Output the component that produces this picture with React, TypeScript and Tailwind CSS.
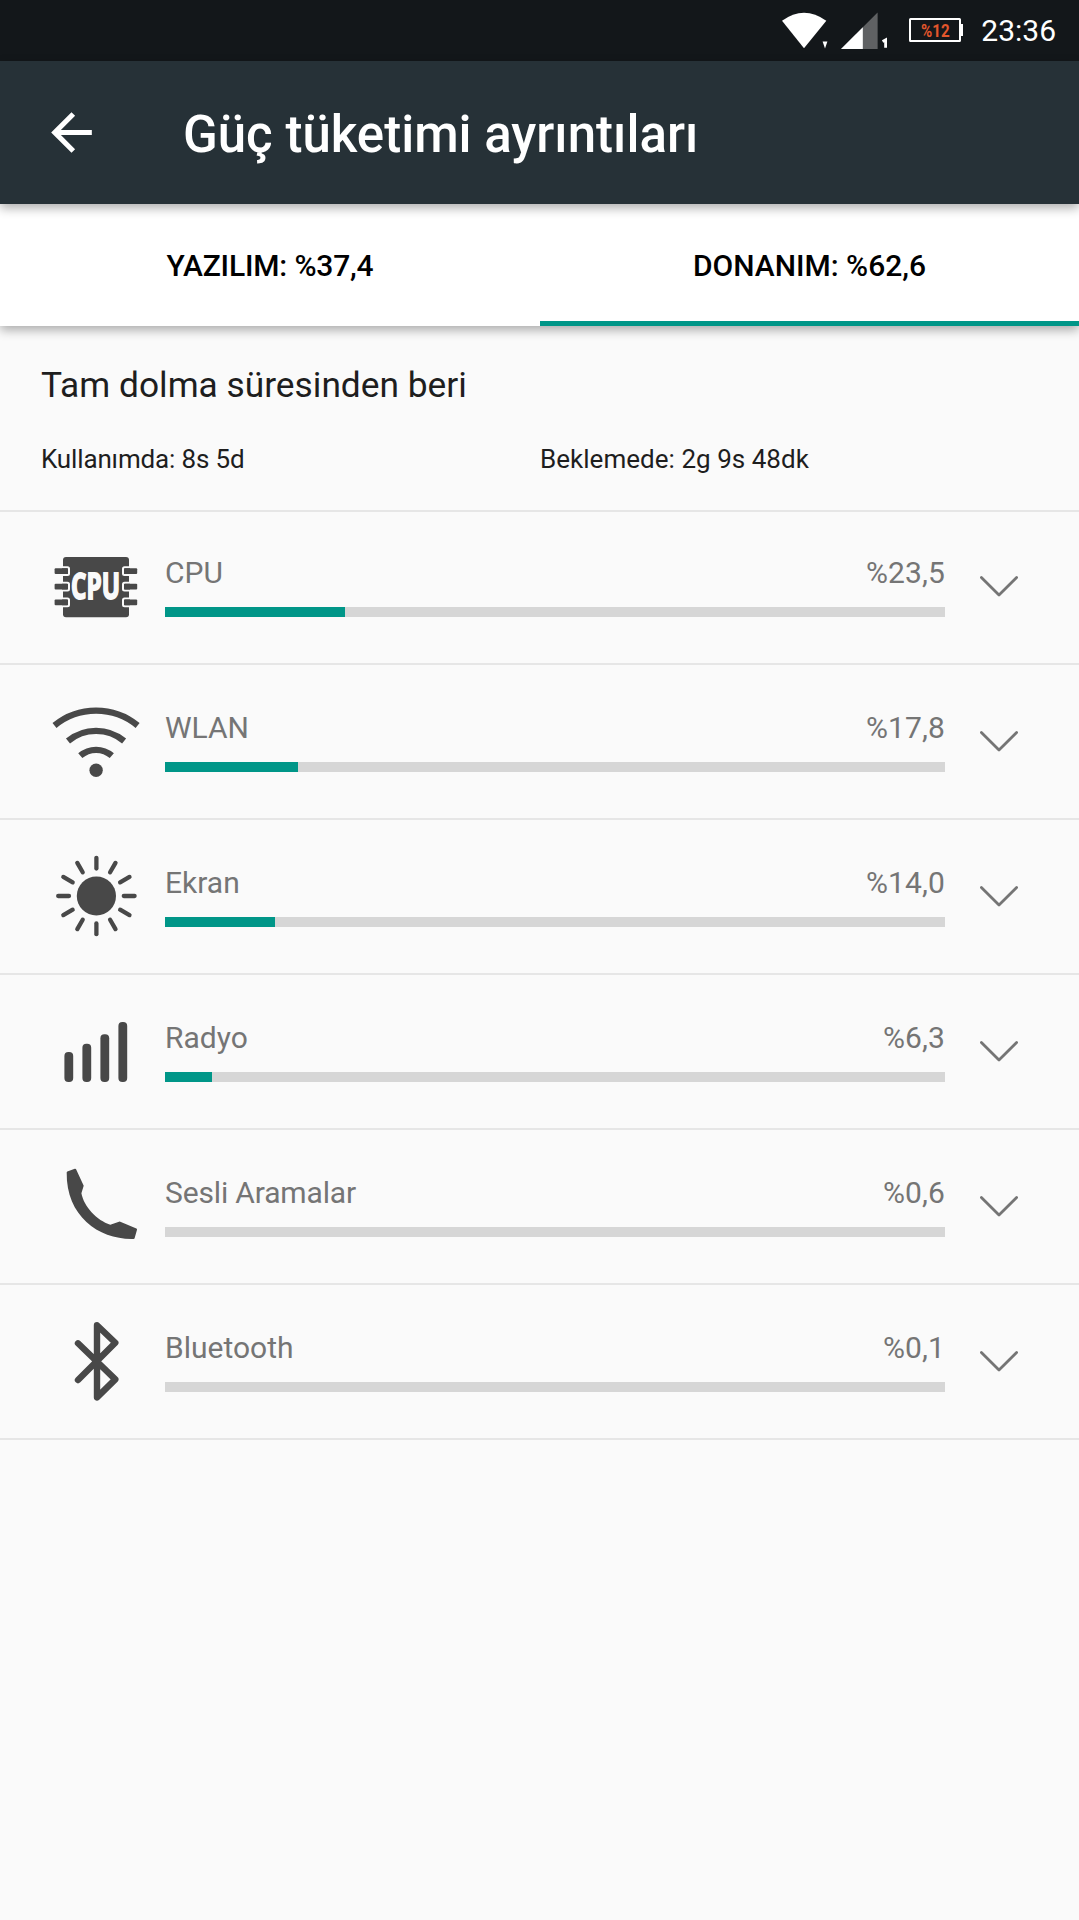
import type { ReactNode } from 'react';

const INK = '#484848';

function CpuIcon() {
  const pins = [33.3, 48.8, 64.4];
  return (
    <>
      <rect x="23" y="22" width="66" height="60.3" rx="3" fill={INK} />
      {pins.map((y) => (
        <g key={y} fill={INK} stroke="#fafafa" strokeWidth="2">
          <path d={`M22 ${y - 1}H27.5Q29 ${y - 1} 29 ${y + 0.5}V${y + 5.3}Q29 ${y + 6.8} 27.5 ${y + 6.8}H22`} />
          <path d={`M90 ${y - 1}H84.5Q83 ${y - 1} 83 ${y + 0.5}V${y + 5.3}Q83 ${y + 6.8} 84.5 ${y + 6.8}H90`} />
          <rect x="14.6" y={y} width="13.2" height="5.8" rx="1" stroke="none" />
          <rect x="84.2" y={y} width="13" height="5.8" rx="1" stroke="none" />
        </g>
      ))}
      <text
        x="31"
        y="64.4"
        fill="#fafafa"
        stroke="#fafafa"
        strokeWidth="1.8"
        textLength="49"
        lengthAdjust="spacingAndGlyphs"
        className="font-['Open_Sans',sans-serif] text-[35px] font-bold"
      >
        CPU
      </text>
    </>
  );
}

function WlanIcon() {
  return (
    <g fill="none" stroke={INK} strokeWidth="6.3">
      <path d="M14.5 35.5A65.6 65.6 0 0 1 97.6 35.5" />
      <path d="M28 51A44 44 0 0 1 84.1 51" />
      <path d="M40.3 65.7A23.9 23.9 0 0 1 71.8 65.7" />
      <circle cx="56.1" cy="80.3" r="6.7" fill={INK} stroke="none" />
    </g>
  );
}

function SunIcon() {
  const angles = [0, 30, 60, 90, 120, 150, 180, 210, 240, 270, 300, 330];
  return (
    <>
      <circle cx="56.4" cy="51" r="19.6" fill={INK} />
      {angles.map((a) => (
        <path
          key={a}
          d="M56.4 12.8V23.6"
          stroke={INK}
          strokeWidth="4.3"
          strokeLinecap="round"
          transform={`rotate(${a} 56.4 51)`}
        />
      ))}
    </>
  );
}

function RadioIcon() {
  return (
    <g fill={INK}>
      <rect x="24.4" y="52" width="8.8" height="30" rx="4" />
      <rect x="42.4" y="43.8" width="8.8" height="38.2" rx="4" />
      <rect x="60.4" y="34.3" width="8.8" height="47.7" rx="4" />
      <rect x="78.4" y="22" width="8.8" height="60" rx="4" />
    </g>
  );
}

function PhoneIcon() {
  return (
    <path
      d="M27.3 16.6L34.8 13.8Q35.7 13.5 36.2 14.4L43.7 30.7L41.4 38.3C44 52 57 65.5 70.3 69.7L79.7 66.4L96.4 73.6Q97.2 74 97 74.8L94.6 83.2Q94.4 84 93.5 84C60 85 26 62 26.7 17.6Q26.7 16.9 27.3 16.6Z"
      fill={INK}
    />
  );
}

function BluetoothIcon() {
  return (
    <path
      d="M38 33.3L75.3 69.4L57 87.4V15.3L75.3 32.7L38 70"
      fill="none"
      stroke={INK}
      strokeWidth="6.4"
      strokeLinecap="round"
      strokeLinejoin="round"
    />
  );
}

type Item = { name: string; value: string; fill: number; icon: ReactNode };

const items: Item[] = [
  { name: 'CPU', value: '%23,5', fill: 180, icon: <CpuIcon /> },
  { name: 'WLAN', value: '%17,8', fill: 133, icon: <WlanIcon /> },
  { name: 'Ekran', value: '%14,0', fill: 110, icon: <SunIcon /> },
  { name: 'Radyo', value: '%6,3', fill: 47, icon: <RadioIcon /> },
  { name: 'Sesli Aramalar', value: '%0,6', fill: 0, icon: <PhoneIcon /> },
  { name: 'Bluetooth', value: '%0,1', fill: 0, icon: <BluetoothIcon /> },
];

function StatusBar() {
  return (
    <div className="flex h-[61px] items-start justify-end bg-[#13171a] pr-[23px] text-white">
      <svg width="46" height="61" viewBox="0 0 46 61" className="mr-[13px]">
        <path d="M0 20.7Q22 4.6 44.3 20.7L22 48.3Z" fill="#fff" />
        <path d="M40.6 41.6H45.4L43 48.6Z" fill="#fff" />
      </svg>
      <svg width="50" height="61" viewBox="0 0 50 61" className="mr-[18px]">
        <path d="M0 49L36.6 12.4V49Z" fill="#5f6163" />
        <path d="M0 49L21.8 27.2V49Z" fill="#fff" />
        <path d="M41.6 41.4L44.6 39.8V47.8" fill="none" stroke="#fff" strokeWidth="2.8" />
      </svg>
      <svg width="55" height="61" viewBox="0 0 55 61" className="mr-[17px]">
        <rect x="1" y="19" width="50" height="22" rx="0.5" fill="none" stroke="#fff" strokeWidth="2" />
        <path d="M52 24H54V36H52Z" fill="#fff" />
        <text
          x="12"
          y="37"
          fill="#e2562c"
          textLength="28.6"
          lengthAdjust="spacingAndGlyphs"
          className="text-[18px] font-bold"
        >
          %12
        </text>
      </svg>
      <span className="text-[30px] leading-[61px]">23:36</span>
    </div>
  );
}

function Row({ item, first }: { item: Item; first: boolean }) {
  return (
    <li
      className={`flex items-end border-b-2 border-[#e6e6e6] pl-[40px] ${first ? 'h-[153px]' : 'h-[155px]'}`}
    >
      <svg width="110" height="120" viewBox="0 0 110 120" className="mr-[15px] mb-[8px] shrink-0">
        {item.icon}
      </svg>
      <div className="mb-[46px] w-[780px]">
        <div className="mb-[16px] flex justify-between text-[30px] leading-[36px] text-[#757575]">
          <span className={item.name.length > 10 ? 'tracking-[-0.15px]' : ''}>{item.name}</span>
          <span className="tracking-[0.1px]">{item.value}</span>
        </div>
        <div className="h-[10px] bg-[#d6d6d6]">
          <div className="h-full bg-[#009688]" style={{ width: item.fill }} />
        </div>
      </div>
      <svg width="40" height="24" viewBox="0 0 40 24" className="mb-[65px] ml-[34px] shrink-0">
        <path
          d="M2.4 3.5L20 21L37.6 3.5"
          fill="none"
          stroke="#757575"
          strokeWidth="2.8"
          strokeLinecap="round"
          strokeLinejoin="round"
        />
      </svg>
    </li>
  );
}

export default function App() {
  return (
    <div className="flex h-[1920px] w-[1079px] flex-col overflow-hidden bg-[#fafafa] font-[Roboto,sans-serif]">
      <StatusBar />
      <header className="z-20 flex h-[143px] items-center bg-[#263137] shadow-[0_4px_10px_rgba(0,0,0,0.32)]">
        <svg width="61" height="61" viewBox="0 0 24 24" className="ml-[41px]">
          <path d="M20 11H7.83l5.59-5.59L12 4l-8 8 8 8 1.41-1.41L7.83 13H20v-2z" fill="#fff" />
        </svg>
        <h1 className="ml-[81px] pt-[4px] text-[51px] leading-[60px] font-medium text-white">
          Güç tüketimi ayrıntıları
        </h1>
      </header>
      <nav className="z-10 grid h-[122px] grid-cols-[540px_539px] bg-white text-center text-[30px] leading-[124px] font-medium text-black shadow-[0_4px_10px_rgba(0,0,0,0.32)]">
        <span className="h-[122px] tracking-[-0.17px]">YAZILIM: %37,4</span>
        <span className="h-[122px] border-b-[5px] border-[#009688]">DONANIM: %62,6</span>
      </nav>
      <section className="h-[186px] border-b-2 border-[#e6e6e6] pt-[38px] pl-[41px] text-[#1e1e1e]">
        <h2 className="text-[35.3px] leading-[42px]">Tam dolma süresinden beri</h2>
        <div className="mt-[37px] grid grid-cols-[499px_1fr] text-[26px] leading-[32px]">
          <span className="tracking-[-0.15px]">Kullanımda: 8s 5d</span>
          <span className="tracking-[0.03px]">Beklemede: 2g 9s 48dk</span>
        </div>
      </section>
      <ul>
        {items.map((item, i) => (
          <Row key={item.name} item={item} first={i === 0} />
        ))}
      </ul>
    </div>
  );
}
